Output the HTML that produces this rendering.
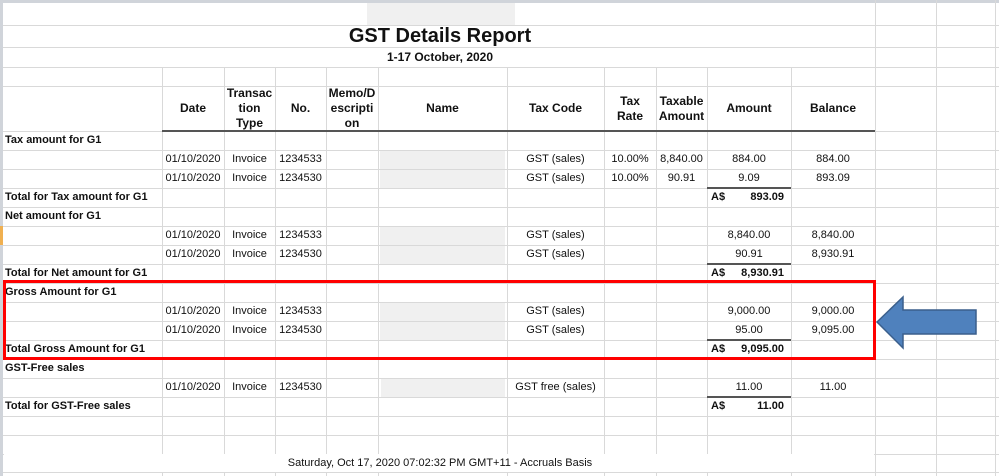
<!DOCTYPE html>
<html><head><meta charset="utf-8"><style>
*{margin:0;padding:0;box-sizing:border-box}
body{width:999px;height:476px;position:relative;overflow:hidden;background:#fff;font-family:"Liberation Sans",Arial,sans-serif;color:#111}
.h{position:absolute;height:1px;background:#d9d9d9}
.v{position:absolute;width:1px;background:#d9d9d9}
.t{position:absolute;font-size:11px;line-height:19px;white-space:nowrap}
.c{text-align:center}
.r{text-align:right}
.b{font-weight:bold}
.g{position:absolute;background:#f0f0f0}
.hd{position:absolute;font-size:12px;font-weight:bold;text-align:center;line-height:15px;display:flex;align-items:center;justify-content:center;height:45px;top:86px}
.k{position:absolute;height:2px;background:#555}
</style></head><body>
<div style="position:absolute;left:0;top:0;width:999px;height:3px;background:#d0d4da"></div>
<div style="position:absolute;left:0;top:0;width:3px;height:476px;background:#d0d4da"></div>
<div style="position:absolute;left:0;top:226px;width:3px;height:19px;background:#f0b050"></div>
<div class="g" style="left:367px;top:3px;width:148px;height:22px"></div>
<div class="g" style="left:380px;top:150px;width:125px;height:38px"></div>
<div class="g" style="left:380px;top:226px;width:125px;height:38px"></div>
<div class="g" style="left:380px;top:302px;width:125px;height:38px"></div>
<div class="g" style="left:381px;top:378px;width:124px;height:19px"></div>

<!-- horizontal lines -->
<div class="h" style="left:3px;top:25px;width:996px"></div>
<div class="h" style="left:3px;top:47px;width:996px"></div>
<div class="h" style="left:3px;top:67px;width:996px"></div>
<div class="h" style="left:3px;top:86px;width:996px"></div>
<div class="h" style="left:3px;top:131px;width:996px"></div>
<div class="h" style="left:3px;top:150px;width:996px"></div>
<div class="h" style="left:3px;top:169px;width:996px"></div>
<div class="h" style="left:3px;top:188px;width:996px"></div>
<div class="h" style="left:3px;top:207px;width:996px"></div>
<div class="h" style="left:3px;top:226px;width:996px"></div>
<div class="h" style="left:3px;top:245px;width:996px"></div>
<div class="h" style="left:3px;top:264px;width:996px"></div>
<div class="h" style="left:3px;top:283px;width:996px"></div>
<div class="h" style="left:3px;top:302px;width:996px"></div>
<div class="h" style="left:3px;top:321px;width:996px"></div>
<div class="h" style="left:3px;top:340px;width:996px"></div>
<div class="h" style="left:3px;top:359px;width:996px"></div>
<div class="h" style="left:3px;top:378px;width:996px"></div>
<div class="h" style="left:3px;top:397px;width:996px"></div>
<div class="h" style="left:3px;top:416px;width:996px"></div>
<div class="h" style="left:3px;top:435px;width:996px"></div>
<div class="h" style="left:3px;top:454px;width:996px"></div>
<div class="h" style="left:3px;top:472px;width:996px"></div>

<!-- vertical lines table -->
<div class="v" style="left:162px;top:67px;height:387px"></div>
<div class="v" style="left:224px;top:67px;height:387px"></div>
<div class="v" style="left:275px;top:67px;height:387px"></div>
<div class="v" style="left:326px;top:67px;height:387px"></div>
<div class="v" style="left:378px;top:67px;height:387px"></div>
<div class="v" style="left:507px;top:67px;height:387px"></div>
<div class="v" style="left:604px;top:67px;height:387px"></div>
<div class="v" style="left:656px;top:67px;height:387px"></div>
<div class="v" style="left:707px;top:67px;height:387px"></div>
<div class="v" style="left:791px;top:67px;height:387px"></div>
<div class="v" style="left:162px;top:472px;height:4px"></div>
<div class="v" style="left:224px;top:472px;height:4px"></div>
<div class="v" style="left:275px;top:472px;height:4px"></div>
<div class="v" style="left:326px;top:472px;height:4px"></div>
<div class="v" style="left:378px;top:472px;height:4px"></div>
<div class="v" style="left:507px;top:472px;height:4px"></div>
<div class="v" style="left:604px;top:472px;height:4px"></div>
<div class="v" style="left:656px;top:472px;height:4px"></div>
<div class="v" style="left:707px;top:472px;height:4px"></div>
<div class="v" style="left:791px;top:472px;height:4px"></div>
<div class="v" style="left:875px;top:0;height:476px"></div>
<div class="v" style="left:936px;top:0;height:476px"></div>
<div class="v" style="left:995px;top:0;height:476px"></div>

<div class="k" style="left:162px;top:130px;width:713px"></div>
<div class="k" style="left:707px;top:187px;width:84px"></div>
<div class="k" style="left:707px;top:263px;width:84px"></div>
<div class="k" style="left:707px;top:339px;width:84px"></div>
<div class="k" style="left:707px;top:396px;width:84px"></div>

<!-- title -->
<div class="t b c" style="left:240px;top:25px;width:400px;line-height:22px;font-size:20px">GST Details Report</div>
<div class="t b c" style="left:240px;top:47px;width:400px;line-height:20px;font-size:12px">1-17 October, 2020</div>

<!-- headers -->
<div class="hd" style="left:162px;width:62px">Date</div>
<div class="hd" style="left:224px;width:51px">Transac<br>tion<br>Type</div>
<div class="hd" style="left:275px;width:51px">No.</div>
<div class="hd" style="left:326px;width:52px">Memo/D<br>escripti<br>on</div>
<div class="hd" style="left:378px;width:129px">Name</div>
<div class="hd" style="left:507px;width:97px">Tax Code</div>
<div class="hd" style="left:604px;width:52px">Tax<br>Rate</div>
<div class="hd" style="left:656px;width:51px">Taxable<br>Amount</div>
<div class="hd" style="left:707px;width:84px">Amount</div>
<div class="hd" style="left:791px;width:84px">Balance</div>

<!-- sections -->
<div class="t b" style="left:5px;top:131px;font-size:11px">Tax amount for G1</div>
<div class="t b" style="left:5px;top:188px">Total for Tax amount for G1</div>
<div class="t b" style="left:5px;top:207px">Net amount for G1</div>
<div class="t b" style="left:5px;top:264px">Total for Net amount for G1</div>
<div class="t b" style="left:5px;top:283px">Gross Amount for G1</div>
<div class="t b" style="left:5px;top:340px">Total Gross Amount for G1</div>
<div class="t b" style="left:5px;top:359px">GST-Free sales</div>
<div class="t b" style="left:5px;top:397px">Total for GST-Free sales</div>

<!-- data rows -->
<div class="t c" style="left:162px;top:150px;width:62px">01/10/2020</div><div class="t c" style="left:224px;top:150px;width:51px">Invoice</div><div class="t c" style="left:275px;top:150px;width:51px">1234533</div><div class="t c" style="left:507px;top:150px;width:97px">GST (sales)</div><div class="t c" style="left:604px;top:150px;width:52px">10.00%</div><div class="t c" style="left:656px;top:150px;width:51px">8,840.00</div><div class="t c" style="left:707px;top:150px;width:84px">884.00</div><div class="t c" style="left:791px;top:150px;width:84px">884.00</div>
<div class="t c" style="left:162px;top:169px;width:62px">01/10/2020</div><div class="t c" style="left:224px;top:169px;width:51px">Invoice</div><div class="t c" style="left:275px;top:169px;width:51px">1234530</div><div class="t c" style="left:507px;top:169px;width:97px">GST (sales)</div><div class="t c" style="left:604px;top:169px;width:52px">10.00%</div><div class="t c" style="left:656px;top:169px;width:51px">90.91</div><div class="t c" style="left:707px;top:169px;width:84px">9.09</div><div class="t c" style="left:791px;top:169px;width:84px">893.09</div>
<div class="t b" style="left:711px;top:188px">A$</div><div class="t b r" style="left:720px;top:188px;width:64px">893.09</div>

<div class="t c" style="left:162px;top:226px;width:62px">01/10/2020</div><div class="t c" style="left:224px;top:226px;width:51px">Invoice</div><div class="t c" style="left:275px;top:226px;width:51px">1234533</div><div class="t c" style="left:507px;top:226px;width:97px">GST (sales)</div><div class="t c" style="left:707px;top:226px;width:84px">8,840.00</div><div class="t c" style="left:791px;top:226px;width:84px">8,840.00</div>
<div class="t c" style="left:162px;top:245px;width:62px">01/10/2020</div><div class="t c" style="left:224px;top:245px;width:51px">Invoice</div><div class="t c" style="left:275px;top:245px;width:51px">1234530</div><div class="t c" style="left:507px;top:245px;width:97px">GST (sales)</div><div class="t c" style="left:707px;top:245px;width:84px">90.91</div><div class="t c" style="left:791px;top:245px;width:84px">8,930.91</div>
<div class="t b" style="left:711px;top:264px">A$</div><div class="t b r" style="left:720px;top:264px;width:64px">8,930.91</div>

<div class="t c" style="left:162px;top:302px;width:62px">01/10/2020</div><div class="t c" style="left:224px;top:302px;width:51px">Invoice</div><div class="t c" style="left:275px;top:302px;width:51px">1234533</div><div class="t c" style="left:507px;top:302px;width:97px">GST (sales)</div><div class="t c" style="left:707px;top:302px;width:84px">9,000.00</div><div class="t c" style="left:791px;top:302px;width:84px">9,000.00</div>
<div class="t c" style="left:162px;top:321px;width:62px">01/10/2020</div><div class="t c" style="left:224px;top:321px;width:51px">Invoice</div><div class="t c" style="left:275px;top:321px;width:51px">1234530</div><div class="t c" style="left:507px;top:321px;width:97px">GST (sales)</div><div class="t c" style="left:707px;top:321px;width:84px">95.00</div><div class="t c" style="left:791px;top:321px;width:84px">9,095.00</div>
<div class="t b" style="left:711px;top:340px">A$</div><div class="t b r" style="left:720px;top:340px;width:64px">9,095.00</div>

<div class="t c" style="left:162px;top:378px;width:62px">01/10/2020</div><div class="t c" style="left:224px;top:378px;width:51px">Invoice</div><div class="t c" style="left:275px;top:378px;width:51px">1234530</div><div class="t c" style="left:507px;top:378px;width:97px">GST free (sales)</div><div class="t c" style="left:707px;top:378px;width:84px">11.00</div><div class="t c" style="left:791px;top:378px;width:84px">11.00</div>
<div class="t b" style="left:711px;top:397px">A$</div><div class="t b r" style="left:720px;top:397px;width:64px">11.00</div>

<div style="position:absolute;left:4px;top:454px;width:870px;height:18px;background:#fff"></div>
<div class="t c" style="left:200px;top:454px;width:480px;line-height:19px">Saturday, Oct 17, 2020 07:02:32 PM GMT+11 - Accruals Basis</div>

<!-- red box -->
<div style="position:absolute;left:3px;top:280px;width:873px;height:80px;border:3px solid #f00"></div>

<!-- arrow -->
<svg style="position:absolute;left:0;top:0" width="999" height="476">
<path d="M877 322 L903 297 L903 310 L976 310 L976 334 L903 334 L903 348 Z" fill="#4f81bd" stroke="#3a5f8c" stroke-width="1.5"/>
</svg>
</body></html>
